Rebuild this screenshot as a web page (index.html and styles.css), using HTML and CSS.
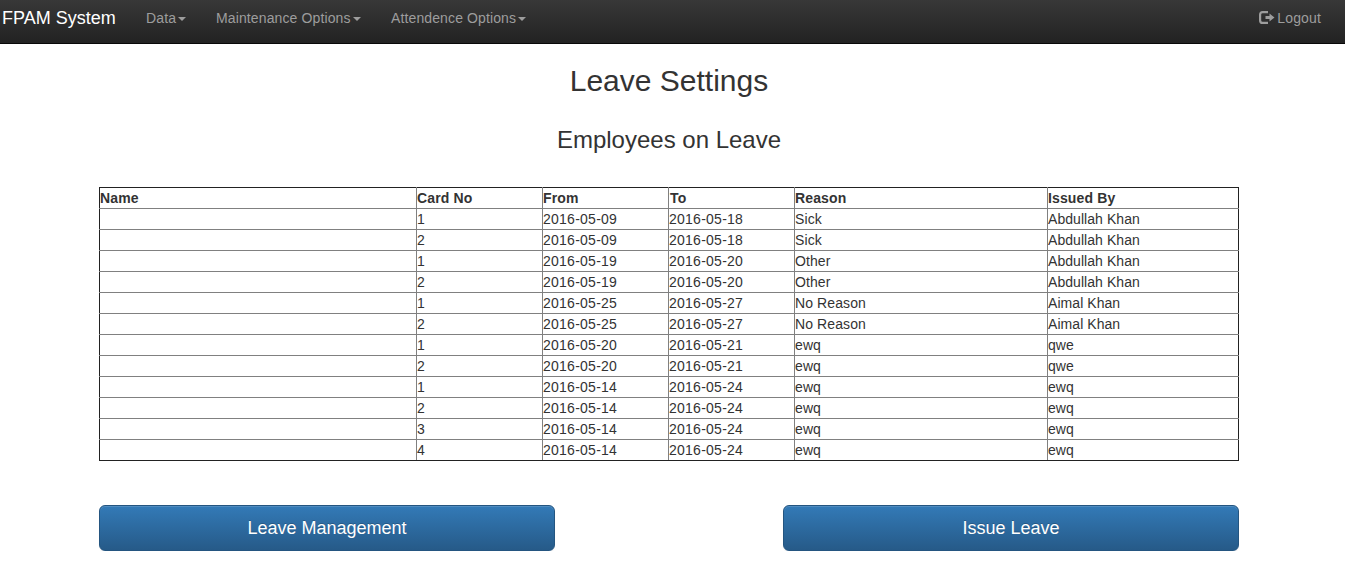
FILE: index.html
```html
<!DOCTYPE html>
<html lang="en">
<head>
<meta charset="utf-8">
<title>FPAM System</title>
<link rel="stylesheet" href="styles.css">
</head>
<body>
<nav class="navbar">
  <a class="brand">FPAM System</a>
  <ul class="menu">
    <li class="menu-data">Data<span class="caret"></span></li>
    <li class="menu-maintenance">Maintenance Options<span class="caret"></span></li>
    <li class="menu-attendance">Attendence Options<span class="caret"></span></li>
  </ul>
  <a class="logout"><svg class="logout-icon" viewBox="0 0 16 14" width="16" height="14"><path d="M10 1.1H4.6Q2.1 1.1 2.1 3.6v5.8q0 2.5 2.5 2.5H10" fill="none" stroke="#9d9d9d" stroke-width="2.2"/><path d="M7.5 5h4V2.5l5 4-5 4V8h-4z" fill="#9d9d9d"/></svg><span>Logout</span></a>
</nav>
<main class="container">
  <h2>Leave Settings</h2>
  <h3>Employees on Leave</h3>
  <table>
    <colgroup><col class="name"><col class="short"><col class="short"><col class="short"><col class="reason"><col class="issuer"></colgroup>
    <thead><tr><th>Name</th><th>Card No</th><th>From</th><th class="to">To</th><th>Reason</th><th>Issued By</th></tr></thead>
    <tbody>
      <tr><td></td><td>1</td><td>2016-05-09</td><td>2016-05-18</td><td>Sick</td><td>Abdullah Khan</td></tr>
      <tr><td></td><td>2</td><td>2016-05-09</td><td>2016-05-18</td><td>Sick</td><td>Abdullah Khan</td></tr>
      <tr><td></td><td>1</td><td>2016-05-19</td><td>2016-05-20</td><td>Other</td><td>Abdullah Khan</td></tr>
      <tr><td></td><td>2</td><td>2016-05-19</td><td>2016-05-20</td><td>Other</td><td>Abdullah Khan</td></tr>
      <tr><td></td><td>1</td><td>2016-05-25</td><td>2016-05-27</td><td>No Reason</td><td>Aimal Khan</td></tr>
      <tr><td></td><td>2</td><td>2016-05-25</td><td>2016-05-27</td><td>No Reason</td><td>Aimal Khan</td></tr>
      <tr><td></td><td>1</td><td>2016-05-20</td><td>2016-05-21</td><td>ewq</td><td>qwe</td></tr>
      <tr><td></td><td>2</td><td>2016-05-20</td><td>2016-05-21</td><td>ewq</td><td>qwe</td></tr>
      <tr><td></td><td>1</td><td>2016-05-14</td><td>2016-05-24</td><td>ewq</td><td>ewq</td></tr>
      <tr><td></td><td>2</td><td>2016-05-14</td><td>2016-05-24</td><td>ewq</td><td>ewq</td></tr>
      <tr><td></td><td>3</td><td>2016-05-14</td><td>2016-05-24</td><td>ewq</td><td>ewq</td></tr>
      <tr><td></td><td>4</td><td>2016-05-14</td><td>2016-05-24</td><td>ewq</td><td>ewq</td></tr>
    </tbody>
  </table>
  <div class="actions">
    <button class="btn">Leave Management</button>
    <button class="btn">Issue Leave</button>
  </div>
</main>
</body>
</html>
```
FILE: styles.css
```css
* { box-sizing: border-box; }
body {
  margin: 0;
  background: #fff;
  color: #333;
  font: 14px/20px "Liberation Sans", Arial, sans-serif;
  overflow: hidden;
}
.navbar {
  display: flex;
  align-items: flex-start;
  height: 44px;
  padding: 8px 24px 0 2px;
  border-bottom: 1px solid #080808;
  background: linear-gradient(#383838, #222);
  color: #9d9d9d;
}
.brand { width: 144px; color: #fff; font-size: 18px; }
.menu { display: flex; margin: 0; padding: 0; list-style: none; letter-spacing: .12px; }
.menu-data { width: 70px; }
.menu-maintenance { width: 175px; }
.caret {
  display: inline-block;
  margin-left: 2px;
  vertical-align: middle;
  border-top: 4px solid #9d9d9d;
  border-left: 4px solid transparent;
  border-right: 4px solid transparent;
}
.logout { display: flex; margin-left: auto; letter-spacing: .15px; }
.logout-icon { margin: 3px 3px 0 0; overflow: visible; }
.container { width: 1140px; margin-left: 99px; }
h2, h3 { margin: 0; font-weight: 400; text-align: center; }
h2 { padding-top: 20px; font-size: 30px; line-height: 33px; }
h3 { margin-top: 30px; font-size: 24px; line-height: 26px; }
table {
  width: 1140px;
  margin-top: 34px;
  table-layout: fixed;
  border-collapse: collapse;
  border: 1px solid #222;
  letter-spacing: .25px;
}
.name { width: 317px; }
.short { width: 126px; }
.reason { width: 253px; }
.issuer { width: 191px; }
th, td { height: 21px; padding: 0; border: 1px solid #808080; text-align: left; }
th { letter-spacing: .13px; }
.to { padding-left: 1px; }
td:nth-child(5) { letter-spacing: .1px; }
td:nth-child(6) { letter-spacing: .06px; }
thead th { border-top-color: #222; }
tbody tr:last-child td { border-bottom-color: #222; }
tr > :first-child { border-left-color: #222; }
tr > :last-child { border-right-color: #222; }
.actions { display: flex; justify-content: space-between; margin-top: 44px; }
.btn {
  width: 456px;
  height: 46px;
  padding: 0;
  border: 1px solid #245580;
  border-radius: 6px;
  background: linear-gradient(#337ab7, #265a88);
  box-shadow: inset 0 1px 0 rgba(255,255,255,.15), 0 1px 1px rgba(0,0,0,.075);
  color: #fff;
  font: 18px/24px "Liberation Sans", Arial, sans-serif;
  text-shadow: 0 -1px 0 rgba(0,0,0,.2);
}
```
